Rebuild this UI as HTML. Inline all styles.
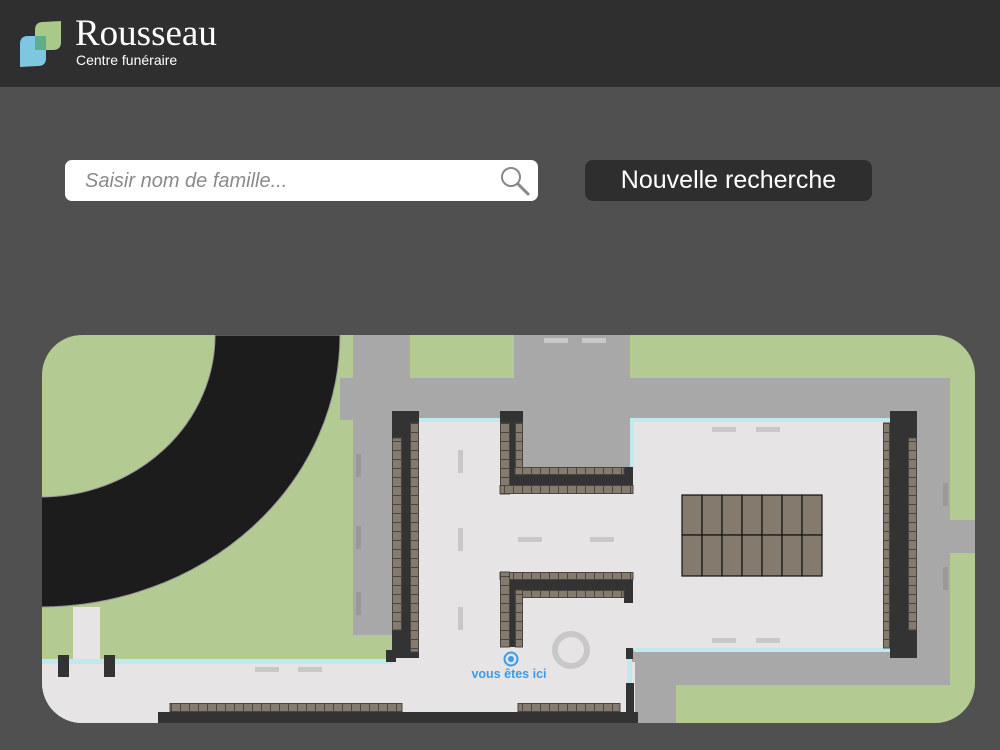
<!DOCTYPE html>
<html><head><meta charset="utf-8"><style>
body{margin:0;width:1000px;height:750px;background:#505050;overflow:hidden;font-family:"Liberation Sans",sans-serif;position:relative}
.hdr{position:absolute;left:0;top:0;width:1000px;height:87px;background:#2f2f2f}
.search{position:absolute;left:65px;top:160px;width:473px;height:41px;background:#fff;border-radius:7px}
.search span{position:absolute;left:20px;top:10px;font-size:20px;font-style:italic;color:#8a8a8a}
.btn{position:absolute;left:585px;top:160px;width:287px;height:41px;background:#2e2e2e;border-radius:8px;color:#fff;font-size:25px;text-align:center;line-height:41px}
</style></head><body>
<div class="hdr">
<svg width="70" height="80" style="position:absolute;left:0;top:0">
<path d="M35 30 Q35 22 43 22 L61 21 L61 42 Q61 50 53 50 L35 50 Z" fill="#a9c98a"/>
<path d="M20 44 Q20 36 28 36 L46 36 L46 58 Q46 66 38 66 L20 67 Z" fill="#7ec7e0"/>
<path d="M35 36 L46 36 L46 50 L35 50 Z" fill="#5fae8a"/>
</svg>
<div style="position:absolute;left:75px;top:14px;font-family:'Liberation Serif',serif;font-size:37px;color:#fff;line-height:40px">Rousseau</div>
<div style="position:absolute;left:76px;top:52px;font-size:14px;color:#fff">Centre funéraire</div>
</div>
<div class="search"><span>Saisir nom de famille...</span>
<svg width="36" height="36" style="position:absolute;left:432px;top:3px"><circle cx="14" cy="14" r="9" fill="none" stroke="#888" stroke-width="2"/><path d="M21 21 L31 31" stroke="#888" stroke-width="3" stroke-linecap="round"/></svg></div>
<div class="btn">Nouvelle recherche</div>
<svg width="1000" height="750" style="position:absolute;left:0;top:0">
<defs>
<clipPath id="c"><rect x="42" y="335" width="933" height="388" rx="40"/></clipPath>
<pattern id="pv" x="0" y="0" width="1000" height="9" patternUnits="userSpaceOnUse"><rect width="1000" height="9" fill="#857a6e"/><rect width="1000" height="1" fill="#4a4540"/></pattern>
<pattern id="ph" x="0" y="0" width="9" height="1000" patternUnits="userSpaceOnUse"><rect width="9" height="1000" fill="#857a6e"/><rect width="1" height="1000" fill="#4a4540"/></pattern>
</defs>
<g clip-path="url(#c)">
<rect x="42" y="335" width="933" height="388" fill="#b3cb93"/>
<g fill="#a8a8a8">
<rect x="353" y="335" width="57" height="300"/>
<rect x="340" y="378" width="610" height="42"/>
<rect x="514" y="335" width="116" height="135"/>
<rect x="890" y="378" width="60" height="307"/>
<rect x="940" y="520" width="40" height="33"/>
<rect x="632" y="650" width="318" height="35"/>
<rect x="632" y="650" width="44" height="80"/>
</g>
<path d="M215 335 A175 162 0 0 1 40 497 L40 607 A300 272 0 0 0 340 335 Z" fill="#1c1c1c" stroke="#999" stroke-width="1"/>
<g fill="#e6e4e5">
<rect x="73" y="607" width="27" height="60"/>
<rect x="40" y="662" width="595" height="70"/>
<rect x="392" y="418" width="240" height="244"/>
<rect x="632" y="420" width="258" height="230"/>
</g>
<rect x="514" y="410" width="116" height="57" fill="#a8a8a8"/>
<g fill="#bfe9ec">
<rect x="40" y="659" width="352" height="5"/>
<rect x="418" y="418" width="82" height="4"/>
<rect x="630" y="418" width="260" height="4"/>
<rect x="630" y="418" width="4" height="50"/>
<rect x="634" y="648" width="256" height="4"/>
<rect x="627" y="658" width="5" height="27"/>
</g>
<g fill="#c8c8c8">
<rect x="544" y="338" width="24" height="5"/><rect x="582" y="338" width="24" height="5"/>
<rect x="712" y="427" width="24" height="5"/><rect x="756" y="427" width="24" height="5"/>
<rect x="712" y="638" width="24" height="5"/><rect x="756" y="638" width="24" height="5"/>
<rect x="518" y="537" width="24" height="5"/><rect x="590" y="537" width="24" height="5"/>
<rect x="255" y="667" width="24" height="5"/><rect x="298" y="667" width="24" height="5"/>
<rect x="458" y="450" width="5" height="23"/><rect x="458" y="528" width="5" height="23"/><rect x="458" y="607" width="5" height="23"/>
</g>
<g fill="#999"><rect x="356" y="454" width="5" height="23"/><rect x="356" y="526" width="5" height="23"/><rect x="356" y="592" width="5" height="23"/>
<rect x="943" y="483" width="5" height="23"/><rect x="943" y="567" width="5" height="23"/></g>
<g fill="#333">
<rect x="392" y="411" width="27" height="247"/>
<rect x="386" y="650" width="10" height="12"/>
<rect x="890" y="411" width="27" height="247"/>
<rect x="500" y="411" width="23" height="25"/>
<rect x="505" y="411" width="18" height="82"/>
<rect x="505" y="475" width="128" height="10"/>
<rect x="624" y="467" width="9" height="18"/>
<rect x="505" y="580" width="128" height="10"/>
<rect x="505" y="580" width="10" height="67"/>
<rect x="624" y="580" width="9" height="23"/>
<rect x="158" y="712" width="480" height="15"/>
<rect x="626" y="683" width="8" height="35"/>
<rect x="626" y="648" width="7" height="11"/>
<rect x="58" y="655" width="11" height="22"/><rect x="104" y="655" width="11" height="22"/>
</g>
<g stroke="#4a4540" stroke-width="1">
<rect x="392.5" y="438" width="9" height="192" fill="url(#pv)"/>
<rect x="410.5" y="423" width="8" height="229" fill="url(#pv)"/>
<rect x="883.5" y="423" width="6" height="225" fill="url(#pv)"/>
<rect x="908.5" y="438" width="8" height="192" fill="url(#pv)"/>
<rect x="500.5" y="423" width="9" height="71" fill="url(#pv)"/>
<rect x="515.5" y="423" width="7" height="52" fill="url(#pv)"/>
<rect x="515" y="467.5" width="109" height="7" fill="url(#ph)"/>
<rect x="500" y="485.5" width="133" height="8" fill="url(#ph)"/>
<rect x="500" y="572.5" width="133" height="7" fill="url(#ph)"/>
<rect x="515" y="590.5" width="109" height="7" fill="url(#ph)"/>
<rect x="500.5" y="572" width="9" height="75" fill="url(#pv)"/>
<rect x="515.5" y="590" width="7" height="57" fill="url(#pv)"/>
<rect x="170" y="703.5" width="232" height="8" fill="url(#ph)"/>
<rect x="518" y="703.5" width="102" height="8" fill="url(#ph)"/>
</g>
<g fill="#857a6e" stroke="#111" stroke-width="1.2">
<rect x="682" y="495" width="20" height="40"/><rect x="702" y="495" width="20" height="40"/><rect x="722" y="495" width="20" height="40"/><rect x="742" y="495" width="20" height="40"/><rect x="762" y="495" width="20" height="40"/><rect x="782" y="495" width="20" height="40"/><rect x="802" y="495" width="20" height="40"/>
<rect x="682" y="535" width="20" height="41"/><rect x="702" y="535" width="20" height="41"/><rect x="722" y="535" width="20" height="41"/><rect x="742" y="535" width="20" height="41"/><rect x="762" y="535" width="20" height="41"/><rect x="782" y="535" width="20" height="41"/><rect x="802" y="535" width="20" height="41"/>
</g>
<circle cx="571" cy="650" r="16" fill="none" stroke="#c8c8c8" stroke-width="6"/>
<circle cx="511" cy="659" r="6.5" fill="none" stroke="#3d9be9" stroke-width="2"/>
<circle cx="511" cy="659" r="3" fill="#3d9be9"/>
<text x="509" y="678" text-anchor="middle" font-family="Liberation Sans" font-weight="bold" font-size="12.5" fill="#3d9be9">vous êtes ici</text>
</g>
</svg>
</body></html>
